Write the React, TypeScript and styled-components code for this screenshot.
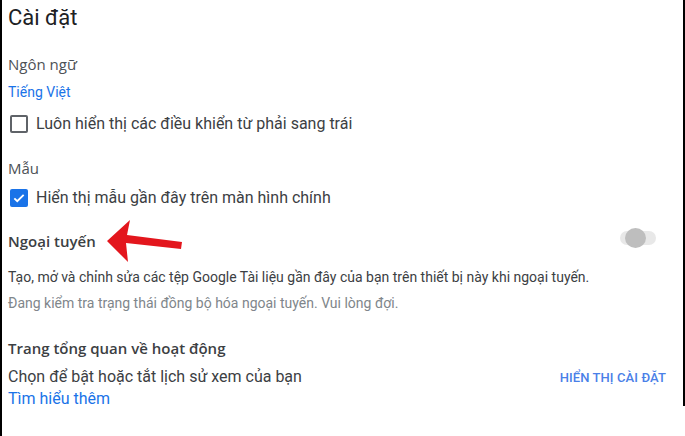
import * as React from "react"
import styled, { createGlobalStyle } from "styled-components"

const GlobalStyle = createGlobalStyle`
  html, body {
    margin: 0;
    padding: 0;
    background: #ffffff;
  }
  body {
    font-family: Roboto, "Noto Sans", Arial, sans-serif;
    -webkit-font-smoothing: antialiased;
  }
`

const Frame = styled.div`
  width: 685px;
  height: 436px;
  box-sizing: border-box;
  border-left: 2px solid #000000;
  background: #ffffff;
  overflow: hidden;
`

const Panel = styled.div`
  position: relative;
  width: 683px;
  height: 406px;
  box-sizing: border-box;
  border-right: 2px solid #000000;
  padding: 4px 17px 0 6px;
  display: flex;
  flex-direction: column;
`

const Title = styled.h1`
  margin: 0;
  font-size: 22px;
  line-height: 28px;
  font-weight: 400;
  color: #202124;
`

const SectionLabel = styled.div<{ $top: number; $tone?: "soft" | "strong" }>`
  margin-top: ${({ $top }) => $top}px;
  font-family: "Open Sans", Roboto, sans-serif;
  font-size: 15px;
  line-height: 20px;
  font-weight: ${({ $tone }) => ($tone === "strong" ? 600 : 400)};
  color: ${({ $tone }) => ($tone === "strong" ? "#3c4043" : "#4d5156")};
`

const Link = styled.a<{ $size?: number; $top?: number; $lh?: number }>`
  display: block;
  margin-top: ${({ $top }) => $top ?? 0}px;
  font-size: ${({ $size }) => $size ?? 14}px;
  line-height: ${({ $lh }) => $lh ?? 20}px;
  color: #1a73e8;
  text-decoration: none;
`

const CheckRow = styled.label<{ $top: number }>`
  display: flex;
  align-items: center;
  gap: 8px;
  margin-top: ${({ $top }) => $top}px;
  height: 20px;
  font-size: 16px;
  line-height: 20px;
  color: #3c4043;
`

const Box = styled.span<{ $checked?: boolean }>`
  width: 18px;
  height: 18px;
  box-sizing: border-box;
  border-radius: 2px;
  margin-left: 2px;
  border: ${({ $checked }) => ($checked ? "none" : "2px solid #5f6368")};
  background: ${({ $checked }) => ($checked ? "#1a73e8" : "#ffffff")};
  display: flex;
  align-items: center;
  justify-content: center;
  flex: none;
`

const HeaderRow = styled.div<{ $top: number }>`
  display: flex;
  align-items: center;
  justify-content: space-between;
  margin-top: ${({ $top }) => $top}px;
`

const Toggle = styled.div`
  position: relative;
  width: 36px;
  height: 14px;
  border-radius: 7px;
  background: #e8e8e8;
  margin-right: 10px;
  margin-top: -6px;
`

const Thumb = styled.span`
  position: absolute;
  left: 5px;
  top: -3px;
  width: 21px;
  height: 20px;
  border-radius: 50%;
  background: #bebebe;
`

const Body = styled.p<{ $top: number; $muted?: boolean }>`
  margin: ${({ $top }) => $top}px 0 0;
  font-size: 14px;
  line-height: 20px;
  color: ${({ $muted }) => ($muted ? "#80868b" : "#3c4043")};
`

const ActivityRow = styled.div`
  display: flex;
  align-items: baseline;
  justify-content: space-between;
  margin-top: 8px;
  font-size: 16px;
  line-height: 21px;
  color: #3c4043;
`

const TextButton = styled.span`
  font-size: 13px;
  font-weight: 500;
  color: #4a80e8;
  letter-spacing: 0.1px;
`

const Arrow = styled.svg`
  position: absolute;
  left: 100px;
  top: 215px;
`

export default function App() {
  return (
    <>
      <GlobalStyle />
      <Frame>
        <Panel>
          <Title>Cài đặt</Title>

          <SectionLabel $top={22}>Ngôn ngữ</SectionLabel>
          <Link $top={8}>Tiếng Việt</Link>
          <CheckRow $top={12}>
            <Box />
            Luôn hiển thị các điều khiển từ phải sang trái
          </CheckRow>

          <SectionLabel $top={24}>Mẫu</SectionLabel>
          <CheckRow $top={10}>
            <Box $checked>
              <svg width="14" height="14" viewBox="0 0 24 24">
                <path d="M4 12.5l5 5L20 6.5" fill="none" stroke="#fff" strokeWidth="3.2" />
              </svg>
            </Box>
            Hiển thị mẫu gần đây trên màn hình chính
          </CheckRow>

          <HeaderRow $top={23}>
            <SectionLabel $top={0} $tone="strong">Ngoại tuyến</SectionLabel>
            <Toggle>
              <Thumb />
            </Toggle>
          </HeaderRow>
          <Body $top={16}>
            Tạo, mở và chỉnh sửa các tệp Google Tài liệu gần đây của bạn trên thiết bị này khi ngoại tuyến.
          </Body>
          <Body $top={6} $muted>
            Đang kiểm tra trạng thái đồng bộ hóa ngoại tuyến. Vui lòng đợi.
          </Body>

          <SectionLabel $top={25} $tone="strong">
            Trang tổng quan về hoạt động
          </SectionLabel>
          <ActivityRow>
            <span>Chọn để bật hoặc tắt lịch sử xem của bạn</span>
            <TextButton>HIỂN THỊ CÀI ĐẶT</TextButton>
          </ActivityRow>
          <Link $size={16} $lh={21}>Tìm hiểu thêm</Link>

          <Arrow width="84" height="50" viewBox="0 0 84 50">
            <path
              d="M5 26 L28 5 L25 20 L80 27 L79 34 L24 28 L26 47 Z"
              fill="#e3161d"
            />
          </Arrow>
        </Panel>
      </Frame>
    </>
  )
}
